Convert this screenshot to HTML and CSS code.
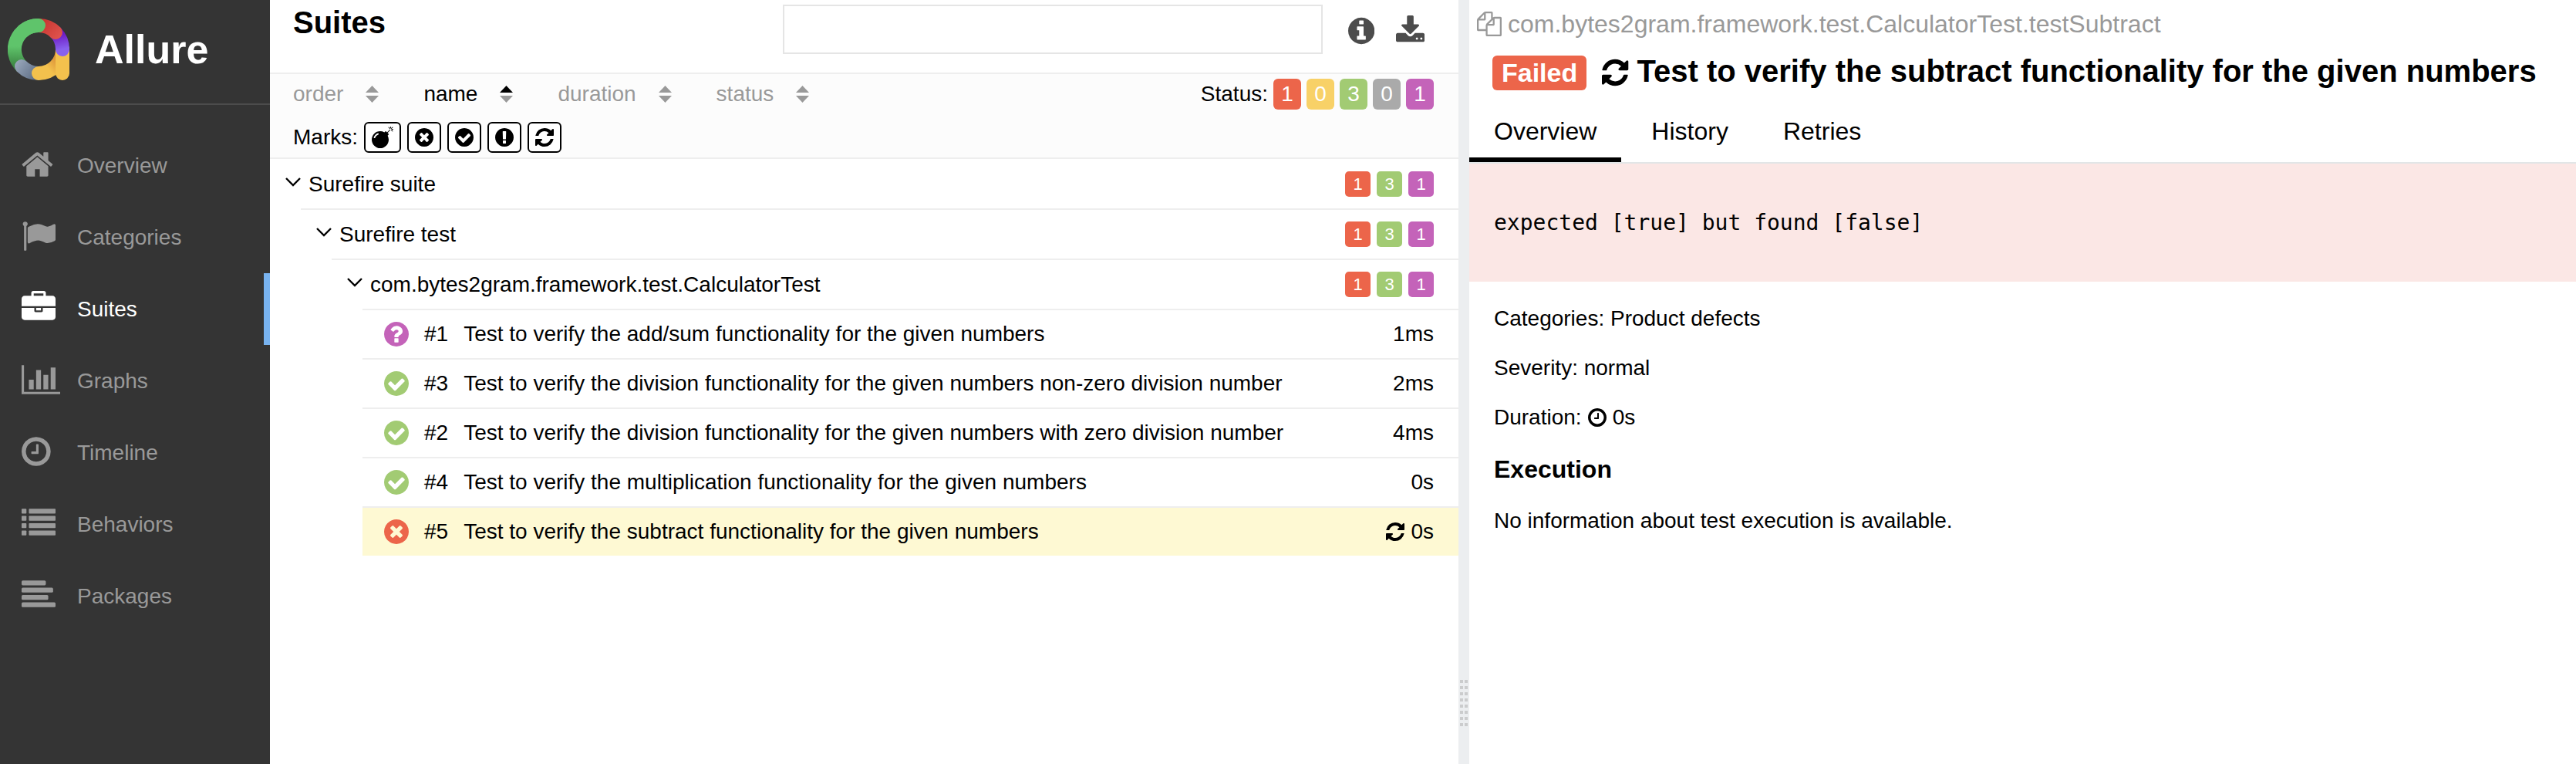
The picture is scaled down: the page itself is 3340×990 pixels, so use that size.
FILE: index.html
```html
<!DOCTYPE html>
<html lang="en">
<head>
<meta charset="utf-8">
<title>Allure Report</title>
<link rel="stylesheet" href="styles.css">
</head>
<body>
<svg class="defs" aria-hidden="true">
  <defs>
    <path id="i-home" d="M1472 992v480q0 26-19 45t-45 19h-384v-384h-256v384h-384q-26 0-45-19t-19-45v-480q0-1 .5-3t.5-3l575-474 575 474q1 2 1 6zm223-69l-62 74q-8 9-21 11h-3q-13 0-21-7l-692-577-692 577q-12 8-24 7-13-2-21-11l-62-74q-8-10-7-23.5t11-21.5l719-599q32-26 76-26t76 26l244 204v-195q0-14 9-23t23-9h192q14 0 23 9t9 23v408l219 182q10 8 11 21.5t-7 23.5z"/>
    <path id="i-flag" d="M320 256q0 72-64 110v1266q0 13-9.5 22.5t-22.5 9.5h-64q-13 0-22.5-9.5t-9.5-22.5v-1266q-64-38-64-110 0-53 37.5-90.5t90.5-37.5 90.5 37.5 37.5 90.5zm1472 64v763q0 25-12.5 38.5t-39.5 27.5q-215 116-369 116-61 0-123.5-22t-108.5-48-115.5-48-142.5-22q-192 0-464 146-17 9-33 9-26 0-45-19t-19-45v-742q0-32 31-55 21-14 79-43 236-120 421-120 107 0 200 29t219 88q38 19 88 19 54 0 117.5-21t110-47 88-47 54.5-21q26 0 45 19t19 45z"/>
    <path id="i-briefcase" d="M640 256h512v-128h-512v128zm1152 640v480q0 66-47 113t-113 47h-1472q-66 0-113-47t-47-113v-480h672v160q0 26 19 45t45 19h320q26 0 45-19t19-45v-160h672zm-768 0v128h-256v-128h256zm768-480v384h-1792v-384q0-66 47-113t113-47h352v-160q0-40 28-68t68-28h576q40 0 68 28t28 68v160h352q66 0 113 47t47 113z"/>
    <path id="i-chart" d="M640 896v512h-256v-512h256zm384-512v1024h-256v-1024h256zm1024 1152v128h-2048v-1536h128v1408h1920zm-640-896v768h-256v-768h256zm384-384v1152h-256v-1152h256z"/>
    <path id="i-clock" d="M1024 544v448q0 14-9 23t-23 9h-320q-14 0-23-9t-9-23v-64q0-14 9-23t23-9h224v-352q0-14 9-23t23-9h64q14 0 23 9t9 23zm416 352q0-148-73-273t-198-198-273-73-273 73-198 198-73 273 73 273 198 198 273 73 273-73 198-198 73-273zm224 0q0 209-103 385.5t-279.5 279.5-385.5 103-385.5-103-279.5-279.5-103-385.5 103-385.5 279.5-279.5 385.5-103 385.5 103 279.5 279.5 103 385.5z"/>
    <g id="i-list">
      <rect x="0" y="128" width="256" height="256" rx="32"/><rect x="384" y="128" width="1408" height="256" rx="32"/>
      <rect x="0" y="512" width="256" height="256" rx="32"/><rect x="384" y="512" width="1408" height="256" rx="32"/>
      <rect x="0" y="896" width="256" height="256" rx="32"/><rect x="384" y="896" width="1408" height="256" rx="32"/>
      <rect x="0" y="1280" width="256" height="256" rx="32"/><rect x="384" y="1280" width="1408" height="256" rx="32"/>
    </g>
    <g id="i-align">
      <rect x="0" y="128" width="1280" height="256" rx="64"/>
      <rect x="0" y="512" width="1664" height="256" rx="64"/>
      <rect x="0" y="896" width="1408" height="256" rx="64"/>
      <rect x="0" y="1280" width="1792" height="256" rx="64"/>
    </g>
    <path id="i-info" d="M1152 1376v-160q0-14-9-23t-23-9h-96v-512q0-14-9-23t-23-9h-320q-14 0-23 9t-9 23v160q0 14 9 23t23 9h96v320h-96q-14 0-23 9t-9 23v160q0 14 9 23t23 9h448q14 0 23-9t9-23zm-128-896v-160q0-14-9-23t-23-9h-192q-14 0-23 9t-9 23v160q0 14 9 23t23 9h192q14 0 23-9t9-23zm640 416q0 209-103 385.5t-279.5 279.5-385.5 103-385.5-103-279.5-279.5-103-385.5 103-385.5 279.5-279.5 385.5-103 385.5 103 279.5 279.5 103 385.5z"/>
    <path id="i-download" d="M1344 1344q0-26-19-45t-45-19-45 19-19 45 19 45 45 19 45-19 19-45zm256 0q0-26-19-45t-45-19-45 19-19 45 19 45 45 19 45-19 19-45zm128-224v320q0 40-28 68t-68 28h-1472q-40 0-68-28t-28-68v-320q0-40 28-68t68-28h465l135 136q58 56 136 56t136-56l136-136h464q40 0 68 28t28 68zm-325-569q17 41-14 70l-448 448q-18 19-45 19t-45-19l-448-448q-31-29-14-70 17-39 59-39h256v-448q0-26 19-45t45-19h256q26 0 45 19t19 45v448h256q42 0 59 39z"/>
    <path id="i-bomb" d="M571 589q-10-25-34-35t-49 0q-108 44-191 127t-127 191q-10 25 0 49t35 34q13 5 24 5 42 0 60-40 34-84 98.5-148.5t148.5-98.5q25-11 35-35t0-49zm942-356l46 46-244 243 68 68q19 19 19 45.5t-19 45.5l-64 64q89 161 89 343 0 143-55.5 273.5t-150 225-225 150-273.5 55.5-273.5-55.5-225-150-150-225-55.5-273.5 55.5-273.5 150-225 225-150 273.5-55.5q182 0 343 89l64-64q19-19 45.5-19t45.5 19l68 68zm8-56q-10 10-22 10-13 0-23-10l-91-90q-9-10-9-23t9-23q10-9 23-9t23 9l90 91q10 9 10 22.5t-10 22.5zm230 230q-11 9-23 9t-23-9l-90-91q-10-9-10-22.5t10-22.5q9-10 22.5-10t22.5 10l91 90q9 10 9 23t-9 23zm41-183q0 14-9 23t-23 9h-96q-14 0-23-9t-9-23 9-23 23-9h96q14 0 23 9t9 23zm-192-192v96q0 14-9 23t-23 9-23-9-9-23v-96q0-14 9-23t23-9 23 9 9 23zm151 55l-91 90q-10 10-22 10-13 0-23-10-10-9-10-22.5t10-22.5l90-91q10-9 23-9t23 9q9 10 9 23t-9 23z"/>
    <path id="i-times" d="M1277 1122q0-26-19-45l-181-181 181-181q19-19 19-45 0-27-19-46l-90-90q-19-19-46-19-26 0-45 19l-181 181-181-181q-19-19-45-19-27 0-46 19l-90 90q-19 19-19 46 0 26 19 45l181 181-181 181q-19 19-19 45 0 27 19 46l90 90q19 19 46 19 26 0 45-19l181-181 181 181q19 19 45 19 27 0 46-19l90-90q19-19 19-46zm387-226q0 209-103 385.5t-279.5 279.5-385.5 103-385.5-103-279.5-279.5-103-385.5 103-385.5 279.5-279.5 385.5-103 385.5 103 279.5 279.5 103 385.5z"/>
    <path id="i-check" d="M1412 734q0-28-18-46l-91-90q-19-19-45-19t-45 19l-408 407-226-226q-19-19-45-19t-45 19l-91 90q-18 18-18 46 0 27 18 45l362 362q19 19 45 19 27 0 46-19l543-543q18-18 18-45zm252 162q0 209-103 385.5t-279.5 279.5-385.5 103-385.5-103-279.5-279.5-103-385.5 103-385.5 279.5-279.5 385.5-103 385.5 103 279.5 279.5 103 385.5z"/>
    <path id="i-exclamation" d="M896 128q209 0 385.5 103t279.5 279.5 103 385.5-103 385.5-279.5 279.5-385.5 103-385.5-103-279.5-279.5-103-385.5 103-385.5 279.5-279.5 385.5-103zm128 1247v-190q0-14-9-23.5t-22-9.5h-192q-13 0-23 10t-10 23v190q0 13 10 23t23 10h192q13 0 22-9.5t9-23.5zm-2-344l18-621q0-12-10-18-10-8-24-8h-220q-14 0-24 8-10 6-10 18l17 621q0 10 10 17.5t24 7.5h185q14 0 23.5-7.5t10.5-17.5z"/>
    <path id="i-question" d="M1024 1376v-192q0-14-9-23t-23-9h-192q-14 0-23 9t-9 23v192q0 14 9 23t23 9h192q14 0 23-9t9-23zm256-672q0-88-55.5-163t-138.5-116-170-41q-243 0-371 213-15 24 8 42l132 100q7 6 19 6 16 0 25-12 53-68 86-92 34-24 86-24 48 0 85.500 26t37.500 59q0 38-20 61t-68 45q-63 28-115.500 86.500t-52.500 125.500v36q0 14 9 23t23 9h192q14 0 23-9t9-23q0-19 21.500-49.500t54.500-49.500q32-18 49-28.500t46-35 44.500-48 28-60.500 12.500-81zm384 192q0 209-103 385.500t-279.500 279.500-385.500 103-385.500-103-279.500-279.500-103-385.500 103-385.500 279.500-279.500 385.500-103 385.500 103 279.500 279.500 103 385.500z"/>
    <path id="i-refresh" d="M1639 1056q0 5-1 7-64 268-268 434.5t-478 166.5q-146 0-282.5-55t-243.5-157l-129 129q-19 19-45 19t-45-19-19-45v-448q0-26 19-45t45-19h448q26 0 45 19t19 45-19 45l-137 137q71 66 161 102t187 36q134 0 250-65t186-179q11-17 53-117 8-23 30-23h192q13 0 22.5 9.5t9.5 22.500zm25-800v448q0 26-19 45t-45 19h-448q-26 0-45-19t-19-45 19-45l138-138q-148-137-349-137-134 0-250 65t-186 179q-11 17-53 117-8 23-30 23h-199q-13 0-22.500-9.500t-9.500-22.500v-7q65-268 270-434.500t480-166.500q146 0 284 55.500t245 156.500l130-129q19-19 45-19t45 19 19 45z"/>
    <path id="i-files" d="M1696 384q40 0 68 28t28 68v1216q0 40-28 68t-68 28h-960q-40 0-68-28t-28-68v-288h-544q-40 0-68-28t-28-68v-672q0-40 20-88t48-76l408-408q28-28 76-48t88-20h416q40 0 68 28t28 68v328q68-40 128-40h416zm-544 213l-299 299h299v-299zm-640-384l-299 299h299v-299zm196 647l316-316v-416h-384v416q0 40-28 68t-68 28h-416v640h512v-256q0-40 20-88t48-76zm956 804v-1152h-384v416q0 40-28 68t-68 28h-416v640h896z"/>
    <path id="i-chevron" d="M1 1l9 9 9-9" fill="none" stroke="currentColor" stroke-width="2.400"/>
    <path id="i-up" d="M0 9L8.500 0L17 9z"/>
    <path id="i-down" d="M0 13h17L8.500 22z"/>
  </defs>
</svg>

<div class="app">
  <aside class="sidebar">
    <div class="brand">
      <svg class="brand-logo" viewBox="0 0 80 80" aria-hidden="true">
        <defs>
          <linearGradient id="g-green" gradientUnits="userSpaceOnUse" x1="0" y1="36" x2="0" y2="64"><stop offset="0" stop-color="#5fc46b"/><stop offset="1" stop-color="#39803f"/></linearGradient>
          <linearGradient id="g-grey" gradientUnits="userSpaceOnUse" x1="12" y1="56" x2="38" y2="74"><stop offset="0" stop-color="#97a5b9"/><stop offset="1" stop-color="#5f6f86"/></linearGradient>
          <linearGradient id="g-arc" gradientUnits="userSpaceOnUse" x1="52" y1="64" x2="66" y2="52"><stop offset="0" stop-color="#f3c14d"/><stop offset="1" stop-color="#d98c36"/></linearGradient>
          <linearGradient id="g-purple" gradientUnits="userSpaceOnUse" x1="66" y1="20" x2="70" y2="40"><stop offset="0" stop-color="#6c18c2"/><stop offset="1" stop-color="#8861ee"/></linearGradient>
          <linearGradient id="g-red" gradientUnits="userSpaceOnUse" x1="46" y1="6" x2="68" y2="24"><stop offset="0" stop-color="#ca3933"/><stop offset="1" stop-color="#df534d"/></linearGradient>
        </defs>
        <g fill="none" stroke-width="18" stroke-linecap="round">
          <path d="M40 9A31 31 0 0 0 18 62" stroke="url(#g-green)" stroke-linecap="butt"/>
          <path d="M18 62A31 31 0 0 0 40 71" stroke="url(#g-grey)"/>
          <path d="M40 71A31 31 0 0 0 71 40" stroke="url(#g-arc)"/>
          <path d="M71 40V71" stroke="#f3c14d"/>
          <path d="M62 18A31 31 0 0 1 71 40" stroke="url(#g-purple)"/>
          <path d="M40 9A31 31 0 0 1 62 18" stroke="url(#g-red)"/>
          <path d="M20 16A31 31 0 0 1 40 9" stroke="#5fc46b"/>
        </g>
      </svg>
      <span class="brand-name">Allure</span>
    </div>
    <nav class="nav">
      <a class="nav-item" href="#overview"><span class="nav-icon"><svg viewBox="64 0 1664 1792"><use href="#i-home"/></svg></span>Overview</a>
      <a class="nav-item" href="#categories"><span class="nav-icon"><svg viewBox="0 0 1792 1792"><use href="#i-flag"/></svg></span>Categories</a>
      <a class="nav-item nav-item-active" href="#suites"><span class="nav-icon"><svg viewBox="0 0 1792 1792"><use href="#i-briefcase"/></svg></span>Suites</a>
      <a class="nav-item" href="#graphs"><span class="nav-icon"><svg viewBox="0 0 2048 1792"><use href="#i-chart"/></svg></span>Graphs</a>
      <a class="nav-item" href="#timeline"><span class="nav-icon"><svg viewBox="128 0 1536 1792"><use href="#i-clock"/></svg></span>Timeline</a>
      <a class="nav-item" href="#behaviors"><span class="nav-icon"><svg viewBox="0 0 1792 1792"><use href="#i-list"/></svg></span>Behaviors</a>
      <a class="nav-item" href="#packages"><span class="nav-icon"><svg viewBox="0 0 1792 1792"><use href="#i-align"/></svg></span>Packages</a>
    </nav>
  </aside>

  <main class="suites">
    <header class="suites-header">
      <h1 class="suites-title">Suites</h1>
      <input class="search" type="text" aria-label="Search">
      <div class="header-actions">
        <button class="icon-button" type="button" aria-label="Info"><svg viewBox="128 0 1536 1792"><use href="#i-info"/></svg></button>
        <button class="icon-button" type="button" aria-label="Download CSV"><svg viewBox="64 0 1664 1792"><use href="#i-download"/></svg></button>
      </div>
    </header>

    <div class="toolbar">
      <div class="toolbar-row">
        <div class="sorter">
          <button class="sort" type="button">order<svg viewBox="0 0 17 22"><use href="#i-up"/><use href="#i-down"/></svg></button>
          <button class="sort sort-active" type="button">name<svg viewBox="0 0 17 22"><use href="#i-up"/><use class="sort-off" href="#i-down"/></svg></button>
          <button class="sort" type="button">duration<svg viewBox="0 0 17 22"><use href="#i-up"/><use href="#i-down"/></svg></button>
          <button class="sort" type="button">status<svg viewBox="0 0 17 22"><use href="#i-up"/><use href="#i-down"/></svg></button>
        </div>
        <div class="statuses">
          <span class="filter-label">Status:</span>
          <button class="status failed" type="button">1</button>
          <button class="status broken" type="button">0</button>
          <button class="status passed" type="button">3</button>
          <button class="status skipped" type="button">0</button>
          <button class="status unknown" type="button">1</button>
        </div>
      </div>
      <div class="marks">
        <span class="filter-label">Marks:</span>
        <button class="mark" type="button" aria-label="Flaky"><svg viewBox="0 0 1792 1792"><use href="#i-bomb"/></svg></button>
        <button class="mark" type="button" aria-label="New failed"><svg viewBox="128 0 1536 1792"><use href="#i-times"/></svg></button>
        <button class="mark" type="button" aria-label="New passed"><svg viewBox="128 0 1536 1792"><use href="#i-check"/></svg></button>
        <button class="mark" type="button" aria-label="New broken"><svg viewBox="128 0 1536 1792"><use href="#i-exclamation"/></svg></button>
        <button class="mark" type="button" aria-label="Retries"><svg viewBox="128 0 1536 1792"><use href="#i-refresh"/></svg></button>
      </div>
    </div>

    <div class="tree">
      <button class="group" type="button">
        <svg class="chevron" viewBox="0 0 20 17"><use href="#i-chevron"/></svg><span class="group-name">Surefire suite</span>
        <span class="counts"><span class="count failed">1</span><span class="count passed">3</span><span class="count unknown">1</span></span>
      </button>
      <div class="children">
        <button class="group" type="button">
          <svg class="chevron" viewBox="0 0 20 17"><use href="#i-chevron"/></svg><span class="group-name">Surefire test</span>
          <span class="counts"><span class="count failed">1</span><span class="count passed">3</span><span class="count unknown">1</span></span>
        </button>
        <div class="children">
          <button class="group" type="button">
            <svg class="chevron" viewBox="0 0 20 17"><use href="#i-chevron"/></svg><span class="group-name">com.bytes2gram.framework.test.CalculatorTest</span>
            <span class="counts"><span class="count failed">1</span><span class="count passed">3</span><span class="count unknown">1</span></span>
          </button>
          <div class="children">
            <a class="leaf" href="#t1"><svg class="leaf-icon is-unknown" viewBox="128 128 1536 1536"><use href="#i-question"/></svg><span>#1</span><span class="leaf-name">Test to verify the add/sum functionality for the given numbers</span><span class="leaf-time">1ms</span></a>
            <a class="leaf" href="#t3"><svg class="leaf-icon is-passed" viewBox="128 128 1536 1536"><use href="#i-check"/></svg><span>#3</span><span class="leaf-name">Test to verify the division functionality for the given numbers non-zero division number</span><span class="leaf-time">2ms</span></a>
            <a class="leaf" href="#t2"><svg class="leaf-icon is-passed" viewBox="128 128 1536 1536"><use href="#i-check"/></svg><span>#2</span><span class="leaf-name">Test to verify the division functionality for the given numbers with zero division number</span><span class="leaf-time">4ms</span></a>
            <a class="leaf" href="#t4"><svg class="leaf-icon is-passed" viewBox="128 128 1536 1536"><use href="#i-check"/></svg><span>#4</span><span class="leaf-name">Test to verify the multiplication functionality for the given numbers</span><span class="leaf-time">0s</span></a>
            <a class="leaf leaf-active" href="#t5"><svg class="leaf-icon is-failed" viewBox="128 128 1536 1536"><use href="#i-times"/></svg><span>#5</span><span class="leaf-name">Test to verify the subtract functionality for the given numbers</span><span class="leaf-time"><svg class="text-icon" viewBox="128 0 1536 1792"><use href="#i-refresh"/></svg>0s</span></a>
          </div>
        </div>
      </div>
    </div>
  </main>

  <div class="gutter" role="separator">
    <svg class="grip" viewBox="0 0 10 60" aria-hidden="true"><path d="M2 0V60M8 0V60" stroke="#cbcccd" stroke-width="4" stroke-dasharray="4 4"/></svg>
  </div>

  <section class="details">
    <div class="path"><svg class="path-icon" viewBox="0 0 1792 1792"><use href="#i-files"/></svg>com.bytes2gram.framework.test.CalculatorTest.testSubtract</div>
    <div class="heading">
      <span class="verdict failed">Failed</span>
      <svg class="heading-icon" viewBox="128 0 1536 1792"><use href="#i-refresh"/></svg>
      <h2 class="heading-title">Test to verify the subtract functionality for the given numbers</h2>
    </div>
    <div class="tabs" role="tablist">
      <button class="tab tab-active" type="button" role="tab" aria-selected="true">Overview</button>
      <button class="tab" type="button" role="tab">History</button>
      <button class="tab" type="button" role="tab">Retries</button>
    </div>
    <pre class="message">expected [true] but found [false]</pre>
    <div class="facts">
      <div class="fact">Categories: Product defects</div>
      <div class="fact">Severity: normal</div>
      <div class="fact">Duration: <svg class="text-icon" viewBox="128 0 1536 1792"><use href="#i-clock"/></svg>0s</div>
      <h3 class="facts-title">Execution</h3>
      <div class="fact">No information about test execution is available.</div>
    </div>
  </section>
</div>
</body>
</html>
```
FILE: styles.css
```css
*, *::before, *::after { box-sizing: border-box; }

body {
  margin: 0;
  font: 28px/32px "Liberation Sans", Helvetica, Arial, sans-serif;
  color: #000;
  background: #fff;
}

h1, h2, h3, pre { margin: 0; }

button {
  margin: 0;
  padding: 0;
  border: 0;
  background: none;
  color: inherit;
  font: inherit;
  text-align: left;
  cursor: pointer;
}

a { color: inherit; text-decoration: none; }

svg { display: block; flex: none; fill: currentColor; }

.defs { position: absolute; width: 0; height: 0; }

.app {
  display: grid;
  grid-template-columns: 350px minmax(0, 1541fr) 14px minmax(0, 1435fr);
  min-height: 100vh;
}

.failed { background: #ec654a; }
.broken { background: #f8d167; }
.passed { background: #a2cb73; }
.skipped { background: #aaa; }
.unknown { background: #c463b9; }
.is-failed { color: #ec654a; }
.is-passed { color: #a2cb73; }
.is-unknown { color: #c463b9; }

/* Sidebar */
.sidebar { background: #343434; color: #999; }

.brand {
  display: flex;
  align-items: center;
  gap: 33px;
  height: 136px;
  padding: 0 10px 6px;
  border-bottom: 2px solid #4c4c4c;
}
.brand-logo { width: 80px; height: 80px; }
.brand-name { color: #fff; font-size: 52px; font-weight: bold; line-height: 60px; }

.nav { padding-top: 32px; }
.nav-item {
  display: flex;
  align-items: center;
  height: 93px;
  padding-left: 28px;
  border-right: 8px solid transparent;
}
.nav-item-active { color: #fff; border-right-color: #78b3f0; }
.nav-icon { flex: none; width: 72px; padding-bottom: 4px; }
.nav-icon svg { height: 44px; }

/* Suites pane */
.suites-header {
  display: flex;
  align-items: center;
  padding: 6px 44px 24px 30px;
  border-bottom: 2px solid #eee;
}
.suites-title {
  flex: 1;
  align-self: flex-start;
  font-size: 40px;
  line-height: 46px;
}
.search {
  width: 47.7%;
  height: 64px;
  padding: 0 16px;
  border: 2px solid #e5e5e5;
  background: #fff;
  font: inherit;
}
.header-actions { display: flex; gap: 28px; margin-left: 33px; padding-top: 4px; }
.icon-button { color: #4c4c4c; }
.icon-button svg { height: 40px; }

.toolbar {
  display: grid;
  gap: 16px;
  padding: 6px 32px 6px 30px;
  background: #fcfcfc;
  border-bottom: 2px solid #eee;
}
.toolbar-row { display: flex; align-items: center; justify-content: space-between; }
.sorter { display: flex; gap: 58px; }
.sort { display: flex; align-items: center; gap: 29px; color: #999; }
.sort svg { width: 17px; height: 22px; }
.sort-active { color: #000; }
.sort-off { color: #999; fill: #999; }

.statuses { display: flex; align-items: center; gap: 7px; }
.status {
  width: 36px;
  height: 40px;
  border-radius: 6px;
  color: #fff;
  text-align: center;
}
.marks { display: flex; align-items: center; gap: 8px; }
.mark {
  height: 40px;
  padding: 0 8px;
  border: 2px solid #000;
  border-radius: 6px;
  background: #fff;
}
.mark svg { height: 28px; }

/* Tree */
.tree { padding-top: 1px; }
.children { padding-left: 40px; }
.group {
  display: flex;
  align-items: center;
  gap: 10px;
  width: 100%;
  min-height: 63px;
  padding: 0 32px 0 20px;
}
.children > .group { min-height: 65px; border-top: 2px solid #eee; }
.chevron { width: 20px; height: 17px; }
.group-name { flex: 1; }
.counts { display: flex; gap: 8px; }
.count {
  width: 33px;
  border-radius: 5px;
  color: #fff;
  font-size: 22px;
  line-height: 33px;
  text-align: center;
}
.leaf {
  display: flex;
  align-items: center;
  gap: 20px;
  min-height: 64px;
  padding: 0 32px 0 28px;
  border-top: 2px solid #eee;
}
.leaf-active { background: #fef9d3; }
.leaf-icon { width: 32px; height: 32px; }
.leaf-name { flex: 1; }
.leaf-time { display: flex; align-items: center; gap: 8px; }
.text-icon { height: 28px; }

/* Split gutter */
.gutter {
  display: flex;
  align-items: flex-end;
  justify-content: center;
  padding-bottom: 49px;
  background: #eceef0;
}
.grip { width: 10px; height: 60px; }

/* Test details */
.path {
  display: flex;
  align-items: center;
  gap: 8px;
  height: 62px;
  padding: 0 10px;
  color: #999;
  font-size: 32px;
}
.path-icon { width: 32px; height: 32px; }
.heading {
  display: flex;
  align-items: baseline;
  padding: 8px 30px 19px;
}
.verdict {
  padding: 0 12px;
  border-radius: 6px;
  color: #fff;
  font-size: 34px;
  font-weight: bold;
  line-height: 45px;
}
.heading-icon { align-self: center; height: 40px; margin: 0 11px 0 20px; }
.heading-title { font-size: 40px; line-height: 45px; }

.tabs { display: flex; gap: 7px; border-bottom: 2px solid #e2e6e7; }
.tab {
  height: 74px;
  padding: 0 32px;
  border-bottom: 6px solid transparent;
  font-size: 32px;
}
.tab-active { border-bottom-color: #000; }

.message {
  padding: 60px 32px;
  background: #fbe7e5;
  font: 28px/33px "DejaVu Sans Mono", monospace;
}
.facts { padding: 16px 32px; }
.fact { display: flex; align-items: center; gap: 8px; min-height: 64px; }
.facts-title { font-size: 32px; line-height: 70px; }
```
